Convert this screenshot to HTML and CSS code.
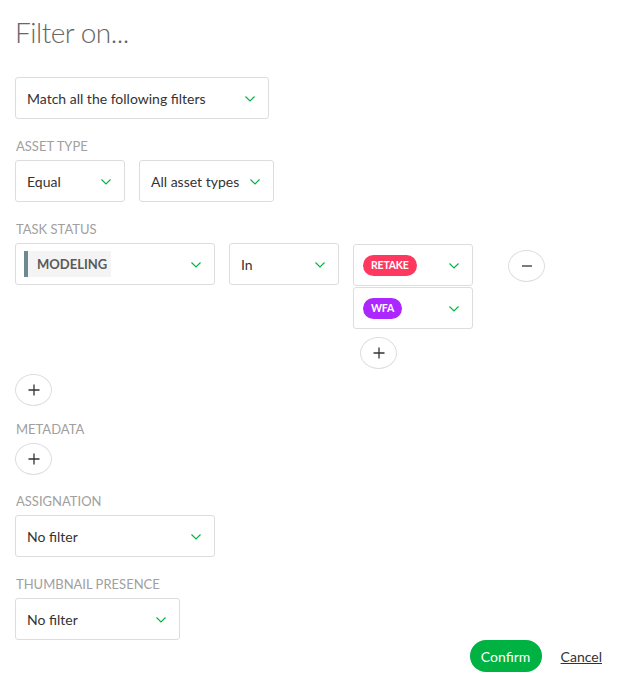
FILE: index.html
```html
<!DOCTYPE html>
<html>
<head>
<meta charset="utf-8">
<link rel="stylesheet" href="styles.css">
</head>
<body>
<div class="modal">
  <h1 class="title">Filter on...</h1>

  <div class="select w-match">
    <span class="value">Match all the following filters</span>
    <svg class="chev" viewBox="0 0 10 6"><path d="M0.5 0.5 L5 5 L9.5 0.5"/></svg>
  </div>

  <div class="label">Asset type</div>
  <div class="row">
    <div class="select w-110">
      <span class="value">Equal</span>
      <svg class="chev" viewBox="0 0 10 6"><path d="M0.5 0.5 L5 5 L9.5 0.5"/></svg>
    </div>
    <div class="select w-135">
      <span class="value">All asset types</span>
      <svg class="chev" viewBox="0 0 10 6"><path d="M0.5 0.5 L5 5 L9.5 0.5"/></svg>
    </div>
  </div>

  <div class="label">Task status</div>
  <div class="row status-row">
    <div class="select w-200 task">
      <span class="task-type">MODELING</span>
      <svg class="chev" viewBox="0 0 10 6"><path d="M0.5 0.5 L5 5 L9.5 0.5"/></svg>
    </div>
    <div class="select w-110">
      <span class="value">In</span>
      <svg class="chev" viewBox="0 0 10 6"><path d="M0.5 0.5 L5 5 L9.5 0.5"/></svg>
    </div>
    <div class="status-col">
      <div class="select w-120 status">
        <span class="pill retake">RETAKE</span>
        <svg class="chev" viewBox="0 0 10 6"><path d="M0.5 0.5 L5 5 L9.5 0.5"/></svg>
      </div>
      <div class="select w-120 status">
        <span class="pill wfa">WFA</span>
        <svg class="chev" viewBox="0 0 10 6"><path d="M0.5 0.5 L5 5 L9.5 0.5"/></svg>
      </div>
      <button class="round add-status"><svg class="ico" viewBox="0 0 12 12"><path d="M6 0.5 V11.5 M0.5 6 H11.5"/></svg></button>
    </div>
    <button class="round minus"><svg class="ico" viewBox="0 0 12 12"><path d="M1 6 H11"/></svg></button>
  </div>
  <button class="round add-task"><svg class="ico" viewBox="0 0 12 12"><path d="M6 0.5 V11.5 M0.5 6 H11.5"/></svg></button>

  <div class="label meta">Metadata</div>
  <button class="round"><svg class="ico" viewBox="0 0 12 12"><path d="M6 0.5 V11.5 M0.5 6 H11.5"/></svg></button>

  <div class="label assign">Assignation</div>
  <div class="select w-200">
    <span class="value">No filter</span>
    <svg class="chev" viewBox="0 0 10 6"><path d="M0.5 0.5 L5 5 L9.5 0.5"/></svg>
  </div>

  <div class="label">Thumbnail presence</div>
  <div class="select w-165">
    <span class="value">No filter</span>
    <svg class="chev" viewBox="0 0 10 6"><path d="M0.5 0.5 L5 5 L9.5 0.5"/></svg>
  </div>

  <div class="footer">
    <button class="confirm">Confirm</button>
    <a class="cancel" href="#">Cancel</a>
  </div>
</div>
</body>
</html>
```

FILE: styles.css
```css
* { box-sizing: border-box; }
html, body { margin: 0; padding: 0; background: #fff; }
body {
  font-family: Lato, "Open Sans", sans-serif;
  font-size: 14px;
  color: #333;
}
.modal {
  padding: 15px 30px 0 15px;
  display: flex;
  flex-direction: column;
  align-items: flex-start;
}
.title {
  margin: 0 0 28px 0;
  font-size: 28px;
  font-weight: 300;
  letter-spacing: -0.5px;
  color: #666;
  line-height: 34px;
}
.label {
  margin-top: 18px;
  margin-bottom: 5px;
  padding-left: 1px;
  font-size: 13px;
  line-height: 18px;
  color: #a0a0a0;
  text-transform: uppercase;
}
.label.meta { margin-top: 14px; }
.label.assign { margin-top: 17px; }
.row { display: flex; gap: 14px; align-items: flex-start; }
.select {
  height: 42px;
  border: 1px solid #ddd;
  border-radius: 3px;
  background: #fff;
  display: flex;
  align-items: center;
  justify-content: space-between;
  padding: 0 13px 0 11px;
}
.value { color: #333; font-size: 14px; white-space: nowrap; }
.chev { width: 10px; height: 6px; flex: none; margin-top: 2px; }
.chev path { fill: none; stroke: #00b242; stroke-width: 1.1; }
.w-match { width: 254px; }
.w-110 { width: 110px; }
.w-135 { width: 135px; }
.w-200 { width: 200px; }
.w-165 { width: 165px; }
.w-120 { width: 120px; }
.select.task { padding-left: 8px; }
.task-type {
  display: block;
  height: 26px;
  line-height: 26px;
  border-left: 4px solid #6d8793;
  background: #f4f4f4;
  padding: 0 9px;
  font-weight: 700;
  font-size: 13px;
  color: #5a5a5a;
  width: 87px;
}
.status-col {
  display: flex;
  flex-direction: column;
  align-items: flex-start;
  gap: 1px;
  margin-top: 1px;
}
.select.status { padding-left: 9px; padding-right: 13px; }
.pill {
  display: inline-block;
  height: 21px;
  line-height: 21px;
  border-radius: 11px;
  color: #fff;
  font-weight: 700;
  font-size: 10.5px;
  letter-spacing: -0.2px;
  padding: 0 8px;
}
.retake { background: #ff3860; }
.wfa { background: #ab26ff; }
.round {
  width: 37px;
  height: 32px;
  border: 1px solid #ddd;
  border-radius: 50%;
  background: #fff;
  padding: 0;
  display: flex;
  align-items: center;
  justify-content: center;
}
.ico { width: 12px; height: 12px; }
.ico path { fill: none; stroke: #333; stroke-width: 1.3; }
.add-status { margin-top: 7px; margin-left: 7px; }
.minus { margin-left: 21px; margin-top: 7px; }
.add-task { margin-top: 5px; }
.footer {
  align-self: stretch;
  display: flex;
  justify-content: flex-end;
  align-items: center;
  gap: 19px;
  margin-top: 0;
}
.confirm {
  height: 32px;
  width: 72px;
  padding: 0;
  border: none;
  border-radius: 16px;
  background: #00b242;
  color: #fff;
  font-family: Lato, sans-serif;
  font-size: 14px;
}
.cancel { color: #333; text-decoration: underline; font-size: 14px; }
```
